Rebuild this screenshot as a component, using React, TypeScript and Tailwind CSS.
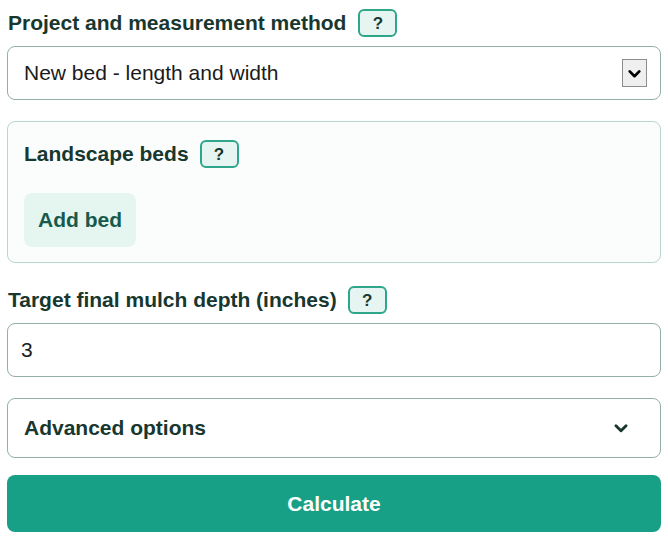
import React from "react";

function HelpBadge() {
  return (
    <button
      type="button"
      className="flex h-[28px] w-[39px] items-center justify-center rounded-[6px] border-2 border-[#2da689] bg-[#e6f5f1] text-[17px] font-bold leading-none text-[#17372f]"
    >
      ?
    </button>
  );
}

function Chevron({ className }: { className?: string }) {
  return (
    <svg viewBox="0 0 16 16" className={className} fill="none" stroke="currentColor" strokeWidth={2.6} strokeLinecap="round" strokeLinejoin="round">
      <path d="M3.5 6 L8 10.5 L12.5 6" />
    </svg>
  );
}

export default function App() {
  return (
    <div
      className="flex w-[668px] flex-col px-[7px] pt-[9px] text-[#17372f]"
      style={{ fontFamily: '"Liberation Sans", Arial, sans-serif' }}
    >
      {/* project / method */}
      <div className="flex h-[28px] items-center gap-[12px] pl-[1px]">
        <span className="text-[21px] font-bold">Project and measurement method</span>
        <HelpBadge />
      </div>
      <div className="mt-[9px] flex h-[54px] items-center justify-between rounded-[8px] border border-[#93afa8] bg-white pl-[16px] pr-[13px]">
        <span className="text-[21px] text-[#1b1b1b]">New bed - length and width</span>
        <div className="flex h-[28px] w-[25px] items-center justify-center border border-[#8d8d8d] bg-[#efefef] text-black">
          <Chevron className="h-[17px] w-[17px]" />
        </div>
      </div>

      {/* beds */}
      <div className="mt-[21px] flex h-[142px] flex-col items-start rounded-[8px] border border-[#b9d5cd] bg-[#fbfdfc] px-[16px] pt-[18px]">
        <div className="flex h-[28px] items-center gap-[11px]">
          <span className="text-[21px] font-bold">Landscape beds</span>
          <HelpBadge />
        </div>
        <button
          type="button"
          className="mt-[25px] flex h-[54px] w-[112px] items-center justify-center rounded-[8px] bg-[#e5f5f0] text-[21px] font-bold text-[#175a4b]"
        >
          Add bed
        </button>
      </div>

      {/* depth */}
      <div className="mt-[23px] flex h-[28px] items-center gap-[11px] pl-[1px]">
        <span className="text-[21px] font-bold">Target final mulch depth (inches)</span>
        <HelpBadge />
      </div>
      <div className="mt-[9px] flex h-[54px] items-center rounded-[8px] border border-[#93afa8] bg-white pl-[13px]">
        <span className="text-[21px] text-[#1b1b1b]">3</span>
      </div>

      {/* advanced */}
      <div className="mt-[21px] flex h-[60px] items-center justify-between rounded-[8px] border border-[#93afa8] bg-white pl-[16px] pr-[30px]">
        <span className="text-[21px] font-bold">Advanced options</span>
        <Chevron className="h-[18px] w-[18px] text-[#17372f]" />
      </div>

      <button
        type="button"
        className="mt-[17px] flex h-[57px] items-center justify-center rounded-[8px] bg-[#17a085] text-[21px] font-bold text-white"
      >
        Calculate
      </button>
    </div>
  );
}
